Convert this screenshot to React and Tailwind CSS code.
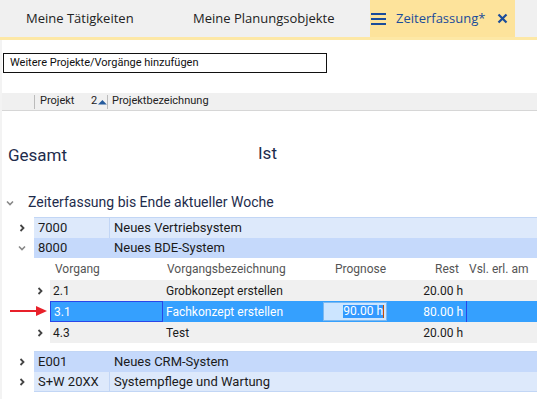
import React from "react";

const Chev = ({ down = false, color = "#444" }) => (
  <svg width="8" height="8" viewBox="0 0 8 8">
    {down ? (
      <path d="M1 2.5 L4 5.5 L7 2.5" fill="none" stroke={color} strokeWidth="1.6" />
    ) : (
      <path d="M2.5 1 L5.5 4 L2.5 7" fill="none" stroke={color} strokeWidth="1.8" />
    )}
  </svg>
);

const ProjRow = ({ id, name, dark, down, last }) => (
  <div className="flex h-[20px] items-center">
    <div className="w-[34px] flex justify-end pr-[8px]">
      <Chev down={down} color={down ? "#888" : "#444"} />
    </div>
    <div
      className={`flex flex-1 h-full items-center text-[13px] text-[#1b1b1b] ${
        dark ? "bg-[#c5d9fb]" : "bg-[#dde9fb]"
      } ${last ? "border-b border-[#c2d6f5]" : ""}`}
    >
      <div className={`w-[76px] h-full flex items-center pl-[4px] ${dark ? "" : "border-r border-[#c2d6f5]"}`}>{id}</div>
      <div className="pl-[4px]">{name}</div>
    </div>
  </div>
);

const SubRow = ({ id, name, rest, selected, children }) => (
  <div className="flex h-[21px] items-center">
    <div className="w-[50px] flex justify-end pr-[6px]">{!selected && <Chev />}</div>
    <div
      className={`flex flex-1 h-full items-center text-[12px] ${
        selected ? "bg-[#35a0fe] text-white" : "bg-[#f0f0f0] text-[#1b1b1b]"
      }`}
    >
      <div className={`w-[113px] h-full flex items-center pl-[3px] ${selected ? "border border-[#2a46e8]" : ""}`}>{id}</div>
      <div className="w-[160px] pl-[3px]">{name}</div>
      <div className="w-[65px] h-full flex items-center">{children}</div>
      <div className="w-[78px] h-full flex items-center justify-end pr-[3px]">{rest}</div>
      <div className={`flex-1 h-full ${selected ? "border-l border-[#2a46e8]" : ""}`}></div>
    </div>
  </div>
);

export default function App() {
  return (
    <div className="w-[537px] h-[399px] bg-white overflow-hidden relative" style={{ fontFamily: "Roboto, 'Liberation Sans', sans-serif" }}>
      {/* Tabs */}
      <div className="flex h-[40px] bg-[#f0f0f0] border-b-[3px] border-[#fde8a6]" style={{ fontFamily: "'Open Sans', 'Noto Sans', sans-serif" }}>
        <div className="w-[193px] pl-[26px] flex items-center text-[13px] text-[#222]">Meine Tätigkeiten</div>
        <div className="w-[177px] flex items-center text-[13px] text-[#222]">Meine Planungsobjekte</div>
        <div className="w-[145px] bg-[#fde39b] flex items-center text-[13px] text-[#1a4c9a]">
          <svg width="16" height="14" viewBox="0 0 16 14" className="ml-[1px]">
            <rect x="0" y="1" width="15" height="2" fill="#1a4c9a" />
            <rect x="0" y="6" width="15" height="2" fill="#1a4c9a" />
            <rect x="0" y="11" width="15" height="2" fill="#1a4c9a" />
          </svg>
          <span className="ml-[9px]">Zeiterfassung*</span>
          <svg width="11" height="11" viewBox="0 0 11 11" className="ml-[12px]">
            <path d="M1.5 1.5 L9.5 9.5 M9.5 1.5 L1.5 9.5" stroke="#1a4c9a" strokeWidth="2.2" />
          </svg>
        </div>
      </div>

      {/* Input */}
      <div className="mt-[13px] ml-[3px] w-[324px] h-[20px] border border-[#111] flex items-center pl-[6px] text-[11px] text-[#111]">
        Weitere Projekte/Vorgänge hinzufügen
      </div>

      {/* Column header */}
      <div className="mt-[20px] h-[18px] bg-[#f0f0f0] border-b border-[#d6d6d6] flex items-center text-[11px] text-[#222]">
        <div className="ml-[34px] w-[1px] h-[14px] bg-[#bbb]"></div>
        <div className="pl-[5px] w-[56px]">Projekt</div>
        <div className="w-[16px] flex items-center">
          2
          <svg width="9" height="6" viewBox="0 0 9 6" className="ml-[1px]"><path d="M0 5.5 L4.5 1 L9 5.5 Z" fill="#245a9c" /></svg>
        </div>
        <div className="w-[1px] h-[14px] bg-[#bbb]"></div>
        <div className="pl-[4px]">Projektbezeichnung</div>
      </div>

      {/* Gesamt / Ist */}
      <div className="flex h-[60px] text-[17px] text-[#1e2c4c]">
        <div className="w-[250px] pl-[8px] pt-[32px]">Gesamt</div>
        <div className="pl-[8px] pt-[30px]">Ist</div>
      </div>

      {/* Group */}
      <div className="flex items-center h-[25px] mt-[19px]">
        <div className="w-[28px] pl-[6px]"><Chev down color="#888" /></div>
        <div className="text-[14px] text-[#1e2c4c]">Zeiterfassung bis Ende aktueller Woche</div>
      </div>

      <div className="mt-[2px] border-t border-[#c2d6f5] ml-[34px]"></div>
      <ProjRow id="7000" name="Neues Vertriebsystem" />
      <ProjRow id="8000" name="Neues BDE-System" dark down />

      {/* Sub header */}
      <div className="flex h-[22px] items-center text-[12px] text-[#555]">
        <div className="w-[55px]"></div>
        <div className="w-[112px]">Vorgang</div>
        <div className="w-[168px]">Vorgangsbezeichnung</div>
        <div className="w-[124px] flex justify-between">
          <span>Prognose</span>
          <span>Rest</span>
        </div>
        <div className="pl-[10px]">Vsl. erl. am</div>
      </div>

      <SubRow id="2.1" name="Grobkonzept erstellen" rest="20.00 h" />
      <SubRow id="3.1" name="Fachkonzept erstellen" rest="80.00 h" selected>
        <div className="w-[64px] h-[19px] bg-[#cce5ff] border border-[#7ab8f0] flex items-center justify-end pr-[2px]">
          <span className="bg-[#3399ff] text-white leading-[13px]">90.00 h</span>
          <span className="w-[1px] h-[13px] bg-[#c05000]"></span>
        </div>
      </SubRow>
      <SubRow id="4.3" name="Test" rest="20.00 h" />

      <div className="h-[8px]"></div>
      <div className="border-t border-[#c2d6f5] ml-[34px]"></div>
      <ProjRow id="E001" name="Neues CRM-System" dark />
      <ProjRow id="S+W 20XX" name="Systempflege und Wartung" last />

      {/* Red arrow overlay */}
      <svg className="absolute left-[10px] top-[305px]" width="38" height="12" viewBox="0 0 38 12">
        <path d="M0 6 L28 6" stroke="#e8202a" strokeWidth="2" />
        <path d="M26 1 L37 6 L26 11 Z" fill="#e8202a" />
      </svg>
      <div className="absolute left-0 top-[40px] w-[2px] h-[359px] bg-[#f3f3f3]"></div>
    </div>
  );
}
